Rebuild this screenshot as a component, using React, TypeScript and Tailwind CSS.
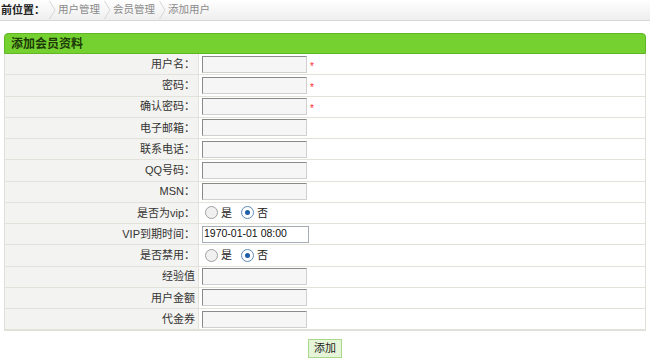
import { Fragment } from "react";

const font = { fontFamily: '"Liberation Sans", "Noto Sans CJK SC", sans-serif' };

type Row = {
	label: string;
	kind: "text" | "radio" | "date";
	required?: boolean;
	value?: string;
};

const rows: Row[] = [
	{ label: "用户名：", kind: "text", required: true },
	{ label: "密码：", kind: "text", required: true },
	{ label: "确认密码：", kind: "text", required: true },
	{ label: "电子邮箱：", kind: "text" },
	{ label: "联系电话：", kind: "text" },
	{ label: "QQ号码：", kind: "text" },
	{ label: "MSN：", kind: "text" },
	{ label: "是否为vip：", kind: "radio" },
	{ label: "VIP到期时间：", kind: "date", value: "1970-01-01 08:00" },
	{ label: "是否禁用：", kind: "radio" },
	{ label: "经验值", kind: "text" },
	{ label: "用户金额", kind: "text" },
	{ label: "代金券", kind: "text" },
];

function Chevron() {
	return (
		<svg width="7" height="20" viewBox="0 0 7 20" className="ml-[4px] mr-[2px] shrink-0">
			<polyline points="0.5,1 6,10 0.5,19" fill="none" stroke="#d6d6d6" strokeWidth="1" />
		</svg>
	);
}

function Radio({ checked }: { checked?: boolean }) {
	return (
		<span
			className={`inline-flex h-[13px] w-[13px] items-center justify-center rounded-full border ${
				checked ? "border-[#5d8bb8] bg-white" : "border-[#a0a0a0] bg-[#f0f0f0]"
			}`}
		>
			{checked && <span className="h-[5px] w-[5px] rounded-full bg-[#1f5fa5]" />}
		</span>
	);
}

function Field({ row }: { row: Row }) {
	if (row.kind === "radio") {
		return (
			<div className="flex items-center gap-[3px] pl-[3px] text-[11px] text-[#222]">
				<Radio />
				<span className="mr-[6px]">是</span>
				<Radio checked />
				<span>否</span>
			</div>
		);
	}
	if (row.kind === "date") {
		return (
			<div className="flex h-[17px] w-[107px] items-center border border-[#a5acb5] bg-white px-[1px] text-[10.5px] text-[#111]">
				{row.value}
			</div>
		);
	}
	return (
		<div className="flex items-center">
			<div className="h-[17px] w-[105px] border border-t-[#8a8a8a] border-l-[#8a8a8a] border-r-[#d0d0d0] border-b-[#d0d0d0] bg-[#f6f6f6]" />
			{row.required && <span className="ml-[3px] mt-[5px] text-[10px] leading-none text-[#ff2a2a]">*</span>}
		</div>
	);
}

export default function App() {
	return (
		<div className="h-[361px] w-[650px] bg-white" style={font}>
			<div className="flex h-[21px] items-center border-b border-[#d8d8d8] bg-gradient-to-b from-white to-[#eeeeee] text-[10.5px] text-[#8a8a8a]">
				<span className="ml-[1px] text-[11px] font-bold text-[#222]">前位置：</span>
				<Chevron />
				<span>用户管理</span>
				<Chevron />
				<span>会员管理</span>
				<Chevron />
				<span>添加用户</span>
			</div>

			<div className="mx-[4px] mt-[12px]">
				<div className="flex h-[21px] items-center rounded-t-[4px] border border-[#62b626] bg-[#74d12f] pl-[6px] text-[12px] font-bold text-[#1d3a08]">
					添加会员资料
				</div>
				<div className="grid grid-cols-[194px_1fr] border-x border-b border-[#e0e0d8]">
					{rows.map((row, i) => (
						<Fragment key={i}>
							<div className="flex h-[21.25px] items-center justify-end border-b border-r border-[#e2e2da] bg-[#f3f3f1] pr-[3px] text-[11px] text-[#333]">
								{row.label}
							</div>
							<div className="flex h-[21.25px] items-center border-b border-[#e2e2da] bg-white pl-[3px]">
								<Field row={row} />
							</div>
						</Fragment>
					))}
				</div>
			</div>

			<div className="mt-[8px] flex justify-center">
				<button className="h-[19px] w-[34px] border border-[#a8d88c] bg-[#e6f5d8] text-[11px] leading-none text-[#222]">
					添加
				</button>
			</div>
		</div>
	);
}
